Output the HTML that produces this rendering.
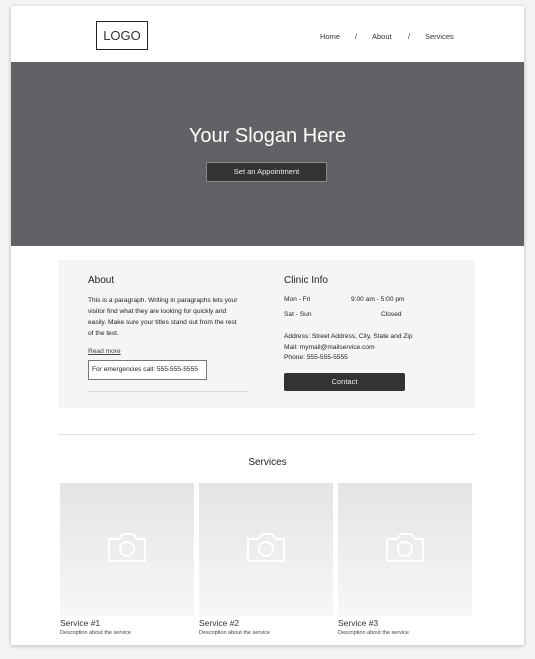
<!DOCTYPE html><html><head><style>
body{margin:0;width:535px;height:659px;background:#f4f4f4;font-family:"Liberation Sans",sans-serif;position:relative;overflow:hidden}
.pg{position:absolute;left:11px;top:6px;width:513px;height:639px;background:#fff;box-shadow:0 1px 4px rgba(0,0,0,.25)}
.a{position:absolute;white-space:nowrap}
.card{position:absolute;top:477px;width:134px;height:133px;background:linear-gradient(#e4e4e4,#f7f7f7)}
.card svg{position:absolute;left:46px;top:48px}
</style></head><body><div class="pg">
<div class="a" style="left:85px;top:15px;width:50px;height:27px;border:1px solid #222;font-size:13px;line-height:27px;text-align:center;color:#333">LOGO</div>
<div class="a" style="left:309px;top:26px;font-size:7.5px;color:#333">Home</div>
<div class="a" style="left:344px;top:26px;font-size:7.5px;color:#333">/</div>
<div class="a" style="left:361px;top:26px;font-size:7.5px;color:#333">About</div>
<div class="a" style="left:397px;top:26px;font-size:7.5px;color:#333">/</div>
<div class="a" style="left:414px;top:26px;font-size:7.5px;color:#333">Services</div>
<div class="a" style="left:0;top:56px;width:513px;height:184px;background:#636165"></div>
<div class="a" style="left:0;top:119px;width:513px;text-align:center;font-size:20px;color:#fff">Your Slogan Here</div>
<div class="a" style="left:195px;top:156px;width:119px;height:18px;background:#333;border:1px solid #888;border-radius:2px;color:#eee;font-size:7.5px;line-height:18px;text-align:center">Set an Appointment</div>
<div class="a" style="left:47px;top:254px;width:417px;height:148px;background:#f5f5f5"></div>
<div class="a" style="left:77px;top:269px;font-size:10px;color:#222">About</div>
<div class="a" style="left:77px;top:289px;font-size:6.6px;line-height:11px;color:#222">This is a paragraph. Writing in paragraphs lets your<br>visitor find what they are looking for quickly and<br>easily. Make sure your titles stand out from the rest<br>of the text.</div>
<div class="a" style="left:77px;top:342px;font-size:6.6px;color:#444;text-decoration:underline">Read more</div>
<div class="a" style="left:77px;top:354px;width:116px;height:18px;border:1px solid #777;background:#fff;font-size:6.6px;line-height:18px;padding-left:3px;box-sizing:border-box;width:119px;height:20px;color:#222">For emergencies call: 555-555-5555</div>
<div class="a" style="left:77px;top:385px;width:161px;height:1px;background:#ddd"></div>
<div class="a" style="left:273px;top:269px;font-size:10px;color:#222">Clinic Info</div>
<div class="a" style="left:273px;top:290px;font-size:6.6px;color:#222">Mon - Fri</div>
<div class="a" style="left:340px;top:290px;font-size:6.6px;color:#222">9:00 am - 5:00 pm</div>
<div class="a" style="left:273px;top:305px;font-size:6.6px;color:#222">Sat - Sun</div>
<div class="a" style="left:370px;top:305px;font-size:6.6px;color:#222">Closed</div>
<div class="a" style="left:273px;top:326px;font-size:6.6px;line-height:10.5px;color:#222">Address: Street Address, City, State and Zip<br>Mail: mymail@mailservice.com<br>Phone: 555-555-5555</div>
<div class="a" style="left:273px;top:367px;width:121px;height:18px;background:#333;border-radius:2px;color:#eee;font-size:7.5px;line-height:18px;text-align:center">Contact</div>
<div class="a" style="left:47px;top:428px;width:417px;height:1px;background:#ddd"></div>
<div class="a" style="left:0;top:451px;width:513px;text-align:center;font-size:10px;color:#222">Services</div>
<div class="card" style="left:49px"><svg width="42" height="34" viewBox="0 0 42 34"><path d="M3 8h10l4-5h10l4 5h8v22H3z" fill="none" stroke="#fff" stroke-width="2" stroke-linejoin="round"/><circle cx="21" cy="18" r="7" fill="none" stroke="#fff" stroke-width="2"/></svg></div>
<div class="card" style="left:188px"><svg width="42" height="34" viewBox="0 0 42 34"><path d="M3 8h10l4-5h10l4 5h8v22H3z" fill="none" stroke="#fff" stroke-width="2" stroke-linejoin="round"/><circle cx="21" cy="18" r="7" fill="none" stroke="#fff" stroke-width="2"/></svg></div>
<div class="card" style="left:327px"><svg width="42" height="34" viewBox="0 0 42 34"><path d="M3 8h10l4-5h10l4 5h8v22H3z" fill="none" stroke="#fff" stroke-width="2" stroke-linejoin="round"/><circle cx="21" cy="18" r="7" fill="none" stroke="#fff" stroke-width="2"/></svg></div>
<div class="a" style="left:49px;top:612px;font-size:8.5px;color:#333">Service #1</div>
<div class="a" style="left:188px;top:612px;font-size:8.5px;color:#333">Service #2</div>
<div class="a" style="left:327px;top:612px;font-size:8.5px;color:#333">Service #3</div>
<div class="a" style="left:49px;top:624px;font-size:5.5px;color:#444">Description about the service</div>
<div class="a" style="left:188px;top:624px;font-size:5.5px;color:#444">Description about the service</div>
<div class="a" style="left:327px;top:624px;font-size:5.5px;color:#444">Description about the service</div>
</div></body></html>
